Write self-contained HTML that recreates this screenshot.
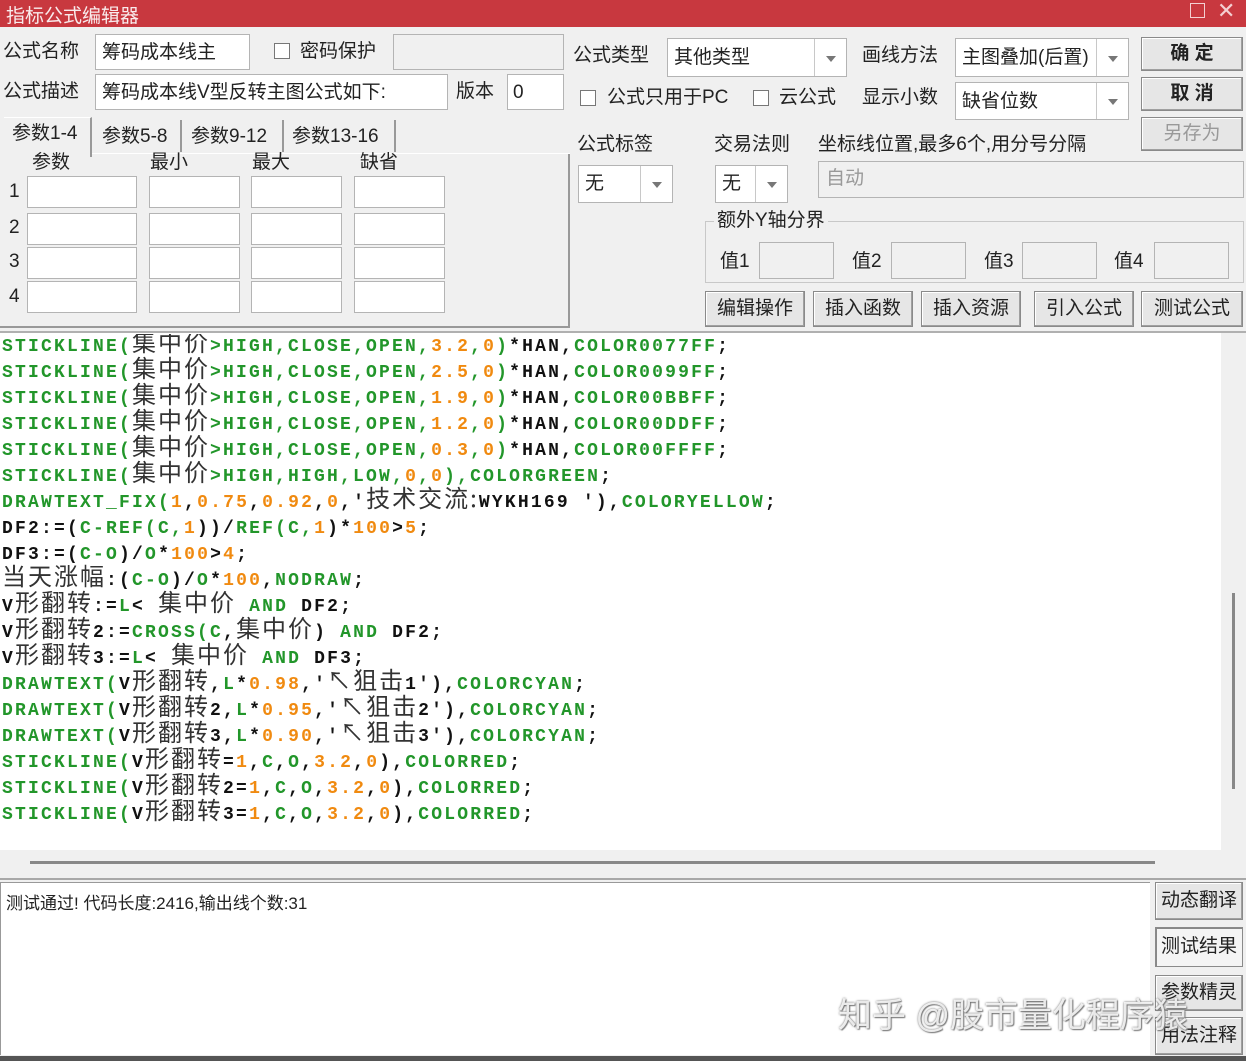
<!DOCTYPE html>
<html><head><meta charset="utf-8">
<style>
*{margin:0;padding:0;box-sizing:border-box}
body{width:1246px;height:1061px;background:#f0f0f0;position:relative;overflow:hidden;font-family:"Liberation Sans","Noto Sans CJK SC",sans-serif;color:#222}
.a{position:absolute}
.lbl{position:absolute;font-size:19px;line-height:24px;white-space:nowrap;color:#222}
.box{position:absolute;background:#fff;border:1px solid #b4b4b4}
.dis{position:absolute;background:#f0f0f0;border:1px solid #b4b4b4}
.btn{position:absolute;background:#e6e6e6;border:1px solid #8a8a8a;box-shadow:inset -1px -1px 0 #a0a0a0,inset 1px 1px 0 #fff;font-size:19px;text-align:center;white-space:nowrap}
.cb{position:absolute;width:16px;height:16px;border:1px solid #777;background:#fff}
.dd{position:absolute;top:0;right:0;width:32px;height:100%;border-left:1px solid #c8c8c8}
.dd:after{content:"";position:absolute;left:11px;top:50%;margin-top:-2px;border-left:5px solid transparent;border-right:5px solid transparent;border-top:6px solid #777}
.code{position:absolute;left:2px;top:334px;width:1218px;height:516px;overflow:hidden;font-family:"Liberation Mono","Noto Sans CJK SC",monospace;font-size:18px;font-weight:bold;letter-spacing:2.2px;color:#111}
.code div{height:26px;line-height:26px;white-space:pre;overflow:visible}
.g{color:#22962a}.o{color:#f08a10}
.c{font-family:"Noto Sans CJK SC",sans-serif;font-weight:normal;font-size:24px;letter-spacing:2px;color:#333;line-height:10px}
</style></head><body>
<div class="a" style="left:0;top:0;width:1246px;height:27px;background:#c8383f"></div>
<div class="a" style="left:6px;top:1px;font-size:19px;color:#fff;opacity:.9">指标公式编辑器</div>
<div class="a" style="left:1190px;top:3px;width:15px;height:15px;border:1.5px solid #f4d0d2"></div>
<div class="a" style="left:1217px;top:-2px;font-size:22px;color:#f4d0d2">✕</div>

<div class="lbl" style="left:3px;top:40px">公式名称</div>
<div class="box" style="left:95px;top:34px;width:155px;height:36px"><span class="lbl" style="left:6px;top:6px">筹码成本线主</span></div>
<div class="cb" style="left:274px;top:43px"></div>
<div class="lbl" style="left:300px;top:40px">密码保护</div>
<div class="dis" style="left:393px;top:34px;width:171px;height:36px"></div>
<div class="lbl" style="left:3px;top:80px">公式描述</div>
<div class="box" style="left:95px;top:74px;width:353px;height:36px"><span class="lbl" style="left:6px;top:6px">筹码成本线V型反转主图公式如下:</span></div>
<div class="lbl" style="left:456px;top:80px">版本</div>
<div class="box" style="left:507px;top:74px;width:57px;height:36px"><span class="lbl" style="left:5px;top:6px">0</span></div>

<div class="a" style="left:4px;top:117px;width:88px;height:40px;border-top:1px solid #fff;border-right:2px solid #999;background:#f0f0f0"></div>
<div class="lbl" style="left:12px;top:122px">参数1-4</div>
<div class="lbl" style="left:102px;top:125px">参数5-8</div>
<div class="a" style="left:180px;top:120px;width:2px;height:32px;background:#999"></div>
<div class="lbl" style="left:191px;top:125px">参数9-12</div>
<div class="a" style="left:282px;top:120px;width:2px;height:32px;background:#999"></div>
<div class="lbl" style="left:292px;top:125px">参数13-16</div>
<div class="a" style="left:394px;top:120px;width:2px;height:32px;background:#999"></div>
<div class="a" style="left:0;top:154px;width:570px;height:174px;border-right:2px solid #999;border-bottom:2px solid #999"></div>
<div class="a" style="left:92px;top:153px;width:478px;height:1px;background:#fff"></div>
<div class="lbl" style="left:32px;top:151px">参数</div>
<div class="lbl" style="left:150px;top:151px">最小</div>
<div class="lbl" style="left:252px;top:151px">最大</div>
<div class="lbl" style="left:360px;top:151px">缺省</div>
<div class="lbl" style="left:9px;top:180px">1</div><div class="lbl" style="left:9px;top:216px">2</div><div class="lbl" style="left:9px;top:250px">3</div><div class="lbl" style="left:9px;top:285px">4</div>
<div class="box" style="left:27px;top:176px;width:110px;height:32px"></div><div class="box" style="left:149px;top:176px;width:91px;height:32px"></div><div class="box" style="left:251px;top:176px;width:91px;height:32px"></div><div class="box" style="left:354px;top:176px;width:91px;height:32px"></div>
<div class="box" style="left:27px;top:213px;width:110px;height:32px"></div><div class="box" style="left:149px;top:213px;width:91px;height:32px"></div><div class="box" style="left:251px;top:213px;width:91px;height:32px"></div><div class="box" style="left:354px;top:213px;width:91px;height:32px"></div>
<div class="box" style="left:27px;top:247px;width:110px;height:32px"></div><div class="box" style="left:149px;top:247px;width:91px;height:32px"></div><div class="box" style="left:251px;top:247px;width:91px;height:32px"></div><div class="box" style="left:354px;top:247px;width:91px;height:32px"></div>
<div class="box" style="left:27px;top:281px;width:110px;height:32px"></div><div class="box" style="left:149px;top:281px;width:91px;height:32px"></div><div class="box" style="left:251px;top:281px;width:91px;height:32px"></div><div class="box" style="left:354px;top:281px;width:91px;height:32px"></div>

<div class="lbl" style="left:573px;top:44px">公式类型</div>
<div class="box" style="left:667px;top:38px;width:180px;height:39px"><span class="lbl" style="left:6px;top:7px">其他类型</span><div class="dd"></div></div>
<div class="lbl" style="left:862px;top:44px">画线方法</div>
<div class="box" style="left:955px;top:38px;width:174px;height:39px"><span class="lbl" style="left:6px;top:7px">主图叠加(后置)</span><div class="dd"></div></div>
<div class="cb" style="left:580px;top:90px"></div>
<div class="lbl" style="left:607px;top:86px">公式只用于PC</div>
<div class="cb" style="left:753px;top:90px"></div>
<div class="lbl" style="left:779px;top:86px">云公式</div>
<div class="lbl" style="left:862px;top:86px">显示小数</div>
<div class="box" style="left:955px;top:82px;width:174px;height:38px"><span class="lbl" style="left:6px;top:7px">缺省位数</span><div class="dd"></div></div>
<div class="btn" style="left:1141px;top:37px;width:102px;height:34px;line-height:32px;font-weight:bold">确 定</div>
<div class="btn" style="left:1141px;top:77px;width:102px;height:34px;line-height:32px;font-weight:bold">取 消</div>
<div class="btn" style="left:1141px;top:117px;width:102px;height:34px;line-height:32px;color:#999">另存为</div>

<div class="lbl" style="left:577px;top:133px">公式标签</div>
<div class="lbl" style="left:714px;top:133px">交易法则</div>
<div class="lbl" style="left:818px;top:133px">坐标线位置,最多6个,用分号分隔</div>
<div class="box" style="left:578px;top:165px;width:95px;height:38px"><span class="lbl" style="left:6px;top:6px">无</span><div class="dd"></div></div>
<div class="box" style="left:715px;top:165px;width:73px;height:38px"><span class="lbl" style="left:6px;top:6px">无</span><div class="dd"></div></div>
<div class="dis" style="left:818px;top:161px;width:426px;height:37px"><span class="lbl" style="left:7px;top:5px;color:#999">自动</span></div>
<div class="a" style="left:705px;top:221px;width:539px;height:62px;border:1px solid #c8c8c8"></div>
<div class="lbl" style="left:714px;top:209px;background:#f0f0f0;padding:0 3px">额外Y轴分界</div>
<div class="lbl" style="left:720px;top:250px">值1</div><div class="dis" style="left:759px;top:242px;width:75px;height:37px"></div>
<div class="lbl" style="left:852px;top:250px">值2</div><div class="dis" style="left:891px;top:242px;width:75px;height:37px"></div>
<div class="lbl" style="left:984px;top:250px">值3</div><div class="dis" style="left:1022px;top:242px;width:75px;height:37px"></div>
<div class="lbl" style="left:1114px;top:250px">值4</div><div class="dis" style="left:1154px;top:242px;width:75px;height:37px"></div>
<div class="btn" style="left:705px;top:291px;width:100px;height:36px;line-height:34px">编辑操作</div>
<div class="btn" style="left:813px;top:291px;width:100px;height:36px;line-height:34px">插入函数</div>
<div class="btn" style="left:921px;top:291px;width:100px;height:36px;line-height:34px">插入资源</div>
<div class="btn" style="left:1034px;top:291px;width:100px;height:36px;line-height:34px">引入公式</div>
<div class="btn" style="left:1141px;top:291px;width:102px;height:36px;line-height:34px">测试公式</div>

<div class="a" style="left:0;top:331px;width:1246px;height:2px;background:#b0b0b0"></div>
<div class="a" style="left:0;top:333px;width:1221px;height:517px;background:#fff"></div>
<div class="a" style="left:1232px;top:593px;width:3px;height:196px;background:#888"></div>
<div class="a" style="left:30px;top:861px;width:1125px;height:3px;background:#888"></div>
<div class="a" style="left:0;top:878px;width:1246px;height:2px;background:#a8a8a8"></div>
<div class="code">
<div><span class="g">STICKLINE(</span><span class="c">集中价</span><span class="g">&gt;HIGH,CLOSE,OPEN,</span><span class="o">3.2</span><span class="g">,</span><span class="o">0</span><span class="g">)</span>*HAN,<span class="g">COLOR0077FF</span>;</div>
<div><span class="g">STICKLINE(</span><span class="c">集中价</span><span class="g">&gt;HIGH,CLOSE,OPEN,</span><span class="o">2.5</span><span class="g">,</span><span class="o">0</span><span class="g">)</span>*HAN,<span class="g">COLOR0099FF</span>;</div>
<div><span class="g">STICKLINE(</span><span class="c">集中价</span><span class="g">&gt;HIGH,CLOSE,OPEN,</span><span class="o">1.9</span><span class="g">,</span><span class="o">0</span><span class="g">)</span>*HAN,<span class="g">COLOR00BBFF</span>;</div>
<div><span class="g">STICKLINE(</span><span class="c">集中价</span><span class="g">&gt;HIGH,CLOSE,OPEN,</span><span class="o">1.2</span><span class="g">,</span><span class="o">0</span><span class="g">)</span>*HAN,<span class="g">COLOR00DDFF</span>;</div>
<div><span class="g">STICKLINE(</span><span class="c">集中价</span><span class="g">&gt;HIGH,CLOSE,OPEN,</span><span class="o">0.3</span><span class="g">,</span><span class="o">0</span><span class="g">)</span>*HAN,<span class="g">COLOR00FFFF</span>;</div>
<div><span class="g">STICKLINE(</span><span class="c">集中价</span><span class="g">&gt;HIGH,HIGH,LOW,</span><span class="o">0</span><span class="g">,</span><span class="o">0</span><span class="g">),COLORGREEN</span>;</div>
<div><span class="g">DRAWTEXT_FIX(</span><span class="o">1</span>,<span class="o">0.75</span>,<span class="o">0.92</span>,<span class="o">0</span>,'<span class="c">技术交流:</span>WYKH169 '),<span class="g">COLORYELLOW</span>;</div>
<div>DF2:=(<span class="g">C-REF(C,</span><span class="o">1</span>))/<span class="g">REF(C,</span><span class="o">1</span>)*<span class="o">100</span>&gt;<span class="o">5</span>;</div>
<div>DF3:=(<span class="g">C-O</span>)/<span class="g">O</span>*<span class="o">100</span>&gt;<span class="o">4</span>;</div>
<div><span class="c">当天涨幅</span>:(<span class="g">C-O</span>)/<span class="g">O</span>*<span class="o">100</span>,<span class="g">NODRAW</span>;</div>
<div>V<span class="c">形翻转</span>:=<span class="g">L</span>&lt; <span class="c">集中价</span> <span class="g">AND</span> DF2;</div>
<div>V<span class="c">形翻转</span>2:=<span class="g">CROSS(C</span>,<span class="c">集中价</span>) <span class="g">AND</span> DF2;</div>
<div>V<span class="c">形翻转</span>3:=<span class="g">L</span>&lt; <span class="c">集中价</span> <span class="g">AND</span> DF3;</div>
<div><span class="g">DRAWTEXT(</span>V<span class="c">形翻转</span>,<span class="g">L</span>*<span class="o">0.98</span>,'<span class="c">↖狙击</span>1'),<span class="g">COLORCYAN</span>;</div>
<div><span class="g">DRAWTEXT(</span>V<span class="c">形翻转</span>2,<span class="g">L</span>*<span class="o">0.95</span>,'<span class="c">↖狙击</span>2'),<span class="g">COLORCYAN</span>;</div>
<div><span class="g">DRAWTEXT(</span>V<span class="c">形翻转</span>3,<span class="g">L</span>*<span class="o">0.90</span>,'<span class="c">↖狙击</span>3'),<span class="g">COLORCYAN</span>;</div>
<div><span class="g">STICKLINE(</span>V<span class="c">形翻转</span>=<span class="o">1</span>,<span class="g">C</span>,<span class="g">O</span>,<span class="o">3.2</span>,<span class="o">0</span>),<span class="g">COLORRED</span>;</div>
<div><span class="g">STICKLINE(</span>V<span class="c">形翻转</span>2=<span class="o">1</span>,<span class="g">C</span>,<span class="g">O</span>,<span class="o">3.2</span>,<span class="o">0</span>),<span class="g">COLORRED</span>;</div>
<div><span class="g">STICKLINE(</span>V<span class="c">形翻转</span>3=<span class="o">1</span>,<span class="g">C</span>,<span class="g">O</span>,<span class="o">3.2</span>,<span class="o">0</span>),<span class="g">COLORRED</span>;</div>
</div>

<div class="a" style="left:0;top:882px;width:1150px;height:173px;background:#fff;border-top:1px solid #999;border-left:1px solid #999"></div>
<div class="a" style="left:6px;top:889px;font-size:17px;color:#222">测试通过! 代码长度:2416,输出线个数:31</div>
<div class="btn" style="left:1155px;top:882px;width:88px;height:38px;line-height:36px">动态翻译</div>
<div class="btn" style="left:1155px;top:927px;width:88px;height:40px;line-height:38px;box-shadow:inset 1px 1px 0 #888;background:#f4f4f4">测试结果</div>
<div class="btn" style="left:1155px;top:975px;width:88px;height:36px;line-height:34px">参数精灵</div>
<div class="btn" style="left:1155px;top:1017px;width:88px;height:38px;line-height:36px">用法注释</div>
<div class="a" style="left:838px;top:988px;font-size:34px;color:rgba(255,255,255,.85);text-shadow:0 0 2px #666,1px 1px 1px #888;white-space:nowrap">知乎 @股市量化程序猿</div>
<div class="a" style="left:0;top:1056px;width:1246px;height:5px;background:#555"></div>
</body></html>
